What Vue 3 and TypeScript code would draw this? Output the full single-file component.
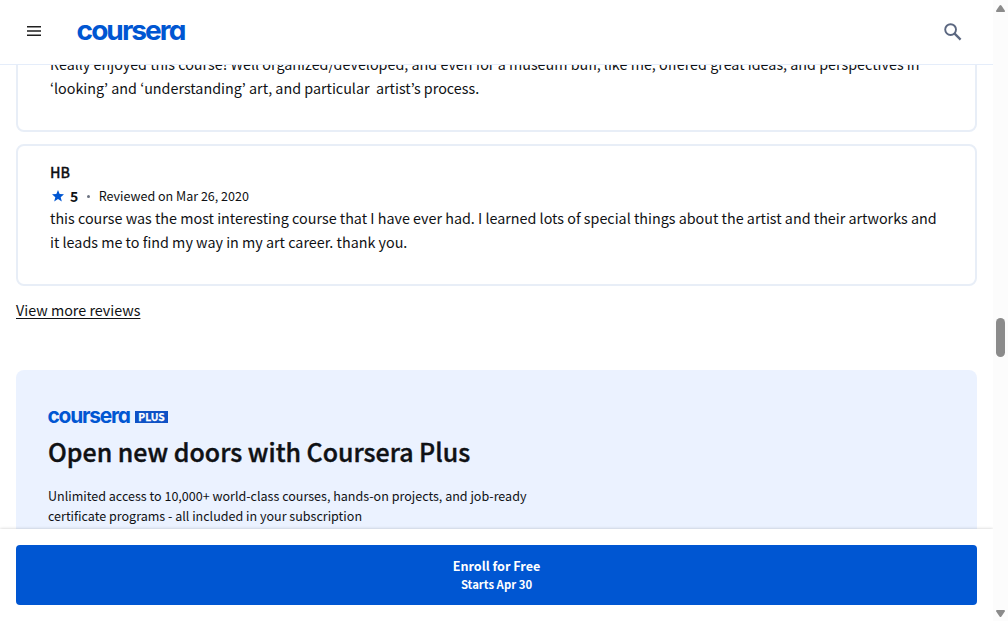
<script setup lang="ts">
interface Review {
  id: number
  name?: string
  rating?: number
  date?: string
  lines: string[]
}

const reviews: Review[] = [
  {
    id: 1,
    lines: [
      'Really enjoyed this course! Well organized/developed, and even for a museum buff, like me, offered great ideas, and perspectives in',
      '‘looking’ and ‘understanding’ art, and particular  artist’s process.',
    ],
  },
  {
    id: 2,
    name: 'HB',
    rating: 5,
    date: 'Mar 26, 2020',
    lines: [
      'this course was the most interesting course that I have ever had. I learned lots of special things about the artist and their artworks and',
      'it leads me to find my way in my art career. thank you.',
    ],
  },
]
</script>

<template>
  <div class="window">
    <div class="page">
      <header class="topbar">
        <button class="icon-btn menu" aria-label="Menu">
          <svg width="14" height="10" viewBox="0 0 14 10"><path d="M0 .75h14M0 5h14M0 9.25h14" stroke="#1f1f1f" stroke-width="1.5" /></svg>
        </button>
        <svg class="logo" width="112" height="36" viewBox="0 0 112 36">
          <text class="wordmark" transform="translate(-.4 25.8) scale(1.02 1)" textLength="107.6" lengthAdjust="spacing" font-size="27.5">coursera</text>
        </svg>
        <button class="icon-btn search" aria-label="Search">
          <svg width="18" height="18" viewBox="0 0 18 18" fill="none" stroke="#5b6780"><circle cx="6.6" cy="6.6" r="5.4" stroke-width="1.9" /><path d="M10.4 10.4l6.2 6.2" stroke-width="2.3" /></svg>
        </button>
      </header>

      <main class="content">
        <article v-for="r in reviews" :key="r.id" class="card">
          <template v-if="r.name">
            <h3 class="name">{{ r.name }}</h3>
            <div class="meta">
              <svg class="star" width="12" height="12" viewBox="0 0 12 12"><path d="M6 0l1.65 4.05 4.35.3-3.3 2.8 1.1 4.35L6 9.1l-3.8 2.4 1.1-4.35L0 4.35l4.35-.3z" fill="#0056d2" /></svg>
              <b class="rating">{{ r.rating }}</b>
              <span class="dot"></span>
              <span class="date">Reviewed on {{ r.date }}</span>
            </div>
          </template>
          <p class="body">
            <span v-for="l in r.lines" :key="l" class="line">{{ l }}</span>
          </p>
        </article>
        <a class="more">View more reviews</a>
        <section class="plus">
          <svg class="plus-logo" width="122" height="20" viewBox="0 0 122 20">
            <text class="wordmark" transform="translate(-.5 17.1) scale(1.02 1)" textLength="81.8" lengthAdjust="spacing" font-size="20.5">coursera</text>
            <rect x="87" y="5" width="33" height="12" fill="#0f52c6" />
            <text class="plus-text" x="90.3" y="15" textLength="26.4" lengthAdjust="spacingAndGlyphs">PLUS</text>
          </svg>
          <h2 class="title">Open new doors with Coursera Plus</h2>
          <p class="desc">
            <span class="line">Unlimited access to 10,000+ world-class courses, hands-on projects, and job-ready</span>
            <span class="line">certificate programs - all included in your subscription</span>
          </p>
        </section>
      </main>

      <footer class="bottom">
        <button class="enroll">
          <span class="free">Enroll for Free</span>
          <span class="starts">Starts Apr 30</span>
        </button>
      </footer>
    </div>
    <aside class="scroll">
      <svg width="9" height="7" viewBox="0 0 9 7"><path d="M3.6.6Q4.5-.4 5.4.6L8.8 5.4Q9.3 7 8 7H1Q-.3 7 .2 5.4z" fill="#8b8b8b" /></svg>
      <div class="thumb"></div>
      <svg class="down" width="9" height="7" viewBox="0 0 9 7"><path d="M3.6 6.4Q4.5 7.4 5.4 6.4L8.8 1.6Q9.3 0 8 0H1Q-.3 0 .2 1.6z" fill="#8b8b8b" /></svg>
    </aside>
  </div>
</template>

<style>
html, body { overflow: hidden; background: #fff; }
</style>

<style scoped>
* { box-sizing: border-box; }
.window {
  display: flex;
  width: 1008px;
  height: 621px;
  background: #fff;
  color: #0f1114;
  font-family: "Noto Sans CJK KR", "Noto Sans", sans-serif;
  font-size: 14.335px;
}
.page { width: 993px; display: flex; flex-direction: column; }
button { border: 0; padding: 0; background: none; font-family: inherit; }
h2, h3, p { margin: 0; }
svg { display: block; flex: none; }
.topbar {
  flex: none;
  height: 65px;
  display: flex;
  align-items: flex-start;
  border-bottom: 1px solid #e5edfa;
  background: #fff;
}
.menu { margin: 26px 0 0 27px; }
.logo { margin: 14px 0 0 36px; overflow: visible; }
.search { margin: 23px 31px 0 auto; }
.wordmark {
  font-family: Inter, sans-serif;
  font-weight: 700;
  font-feature-settings: "cv11";
  fill: #0056d2;
}
.plus-text { fill: #fff; font-size: 10.8px; font-weight: 700; stroke: #fff; stroke-width: .25px; }
.content { flex: 1; min-height: 0; overflow: hidden; padding: 0 16px; }
.card {
  height: 142px;
  padding: 14px 32px 0;
  border: 2px solid #e8eef7;
  border-radius: 8px;
}
.card:first-child { margin-top: -75px; padding-top: 60px; margin-bottom: 12px; }
.name { font-size: 14.2px; line-height: 24px; font-weight: 500; -webkit-text-stroke: .3px; }
.meta { display: flex; align-items: center; height: 20px; margin-top: 2px; }
.star { margin-left: 2px; }
.rating { margin-left: 6px; font-size: 14px; font-weight: 700; line-height: 20px; }
.dot { width: 3px; height: 3px; border-radius: 50%; background: #6b7280; margin: 0 8.5px 0 9px; }
.date { font-size: 12.53px; line-height: 20px; }
.line { display: block; white-space: pre; line-height: 24px; }
.more {
  display: block;
  width: max-content;
  margin-top: 12px;
  line-height: 24px;
  text-decoration: underline;
  text-underline-offset: 2px;
  text-decoration-thickness: 1px;
}
.plus {
  height: 300px;
  margin-top: 48px;
  padding: 36px 32px;
  border-radius: 8px;
  background: #ebf2ff;
}
.plus-logo { overflow: visible; }
.title { margin-top: 7px; font-size: 24.95px; line-height: 36px; font-weight: 500; -webkit-text-stroke: .4px; }
.desc { margin-top: 17px; font-size: 12.54px; }
.desc .line { line-height: 20px; }
.bottom {
  flex: none;
  height: 92px;
  padding: 16px;
  background: #fff;
  box-shadow: 0 0 3px rgba(0, 0, 0, .22);
  position: relative;
}
.enroll {
  display: flex;
  flex-direction: column;
  align-items: center;
  justify-content: center;
  width: 961px;
  height: 60px;
  border-radius: 4px;
  background: #0056d2;
  color: #fff;
  font-weight: 700;
}
.free { font-size: 12.6px; line-height: 18px; }
.starts { font-size: 11.35px; line-height: 18px; }
.scroll {
  width: 15px;
  display: flex;
  flex-direction: column;
  align-items: flex-start;
  padding: 5px 0 4px 3px;
  background: #fcfcfc;
  position: relative;
}
.thumb { width: 9px; height: 39px; margin-top: 306px; border-radius: 5px; background: #8b8b8b; }
.down { margin-top: auto; }
</style>
